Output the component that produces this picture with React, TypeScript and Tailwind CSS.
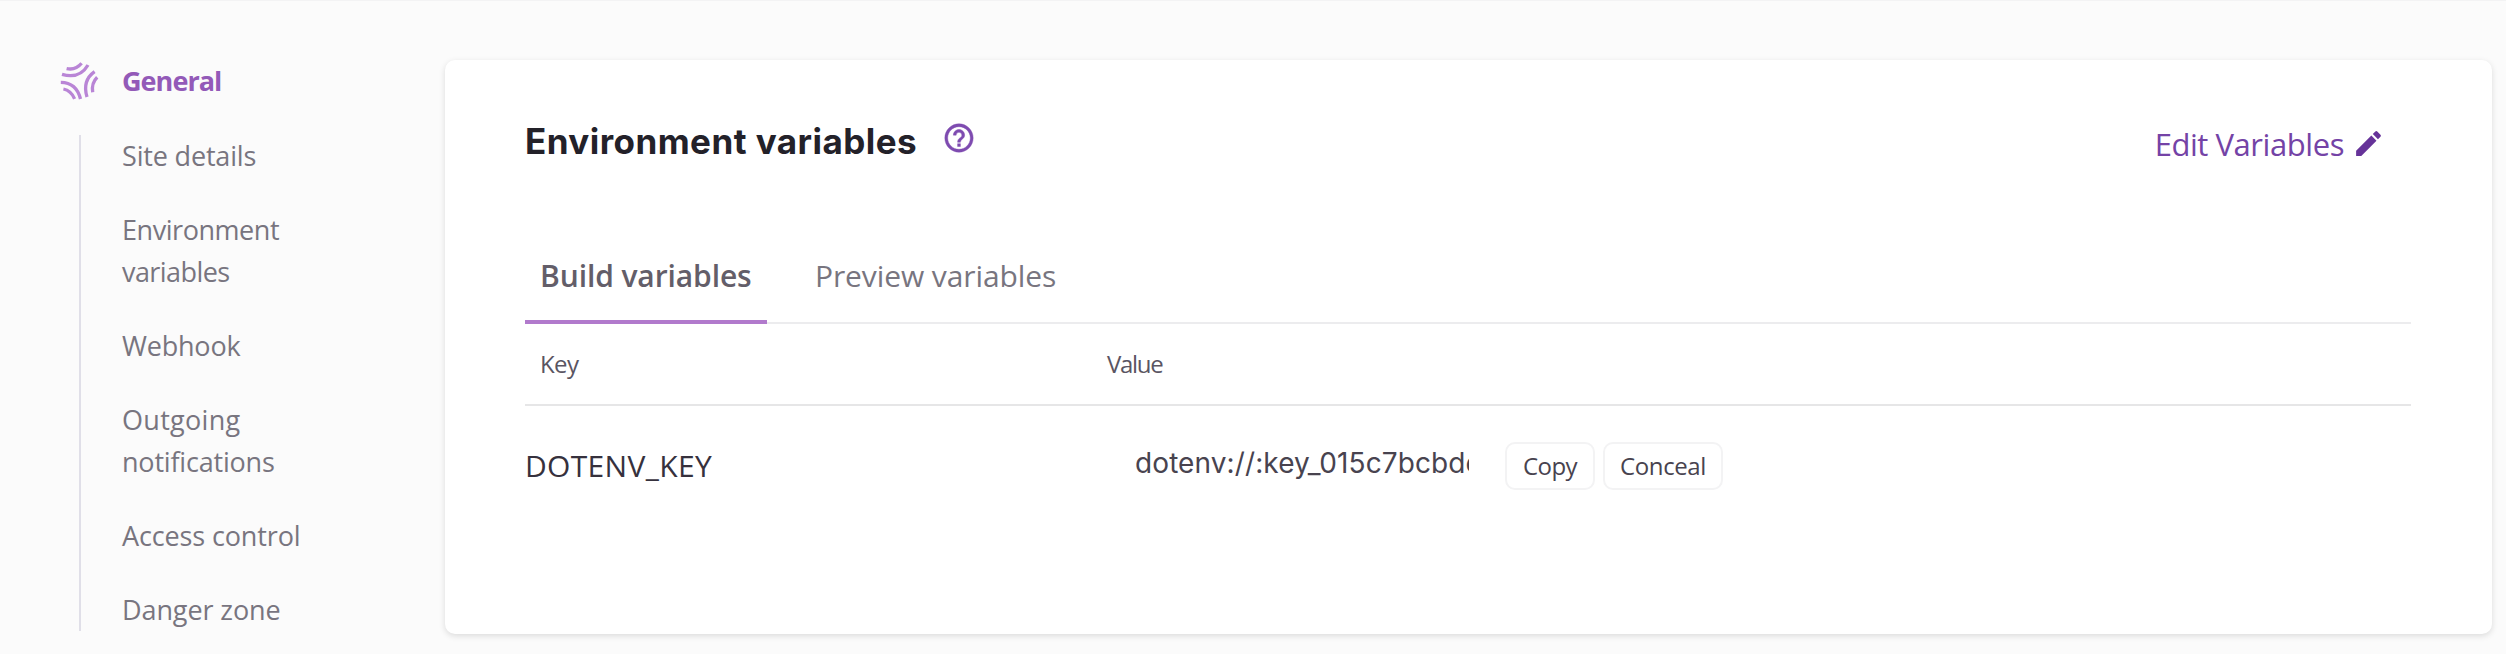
import React from 'react';

const navItems = [
  { lines: [{ text: 'Site details', tracking: 'tracking-[-0.17px]' }] },
  {
    lines: [
      { text: 'Environment', tracking: 'tracking-[-0.45px]' },
      { text: 'variables', tracking: 'tracking-[-0.56px]' },
    ],
  },
  { lines: [{ text: 'Webhook', tracking: 'tracking-[-0.2px]' }] },
  {
    lines: [
      { text: 'Outgoing', tracking: 'tracking-[0.3px]' },
      { text: 'notifications', tracking: 'tracking-[-0.2px]' },
    ],
  },
  { lines: [{ text: 'Access control', tracking: 'tracking-[-0.13px]' }] },
  { lines: [{ text: 'Danger zone', tracking: 'tracking-[-0.1px]' }] },
];

function BrandMark() {
  return (
    <svg
      className="mt-px h-[42px] w-[42px] shrink-0"
      viewBox="58 60 42 42"
      fill="none"
      stroke="#b985d6"
      strokeWidth="3.3"
      strokeLinecap="butt"
    >
      <path d="M66.6 67.6 Q75.5 69.6 81.6 62.3" />
      <path d="M62 73.3 Q79.5 78.5 88 64" />
      <path d="M60.8 81.3 Q76.5 81.5 80.5 98" />
      <path d="M63.4 88 Q71 89.5 74.6 97.8" />
      <path d="M94.6 70.6 Q82 79.5 87 96" />
      <path d="M97.2 76.2 Q91.2 82 92.7 91.3" />
    </svg>
  );
}

function HelpIcon() {
  return (
    <svg className="h-[34px] w-[34px]" viewBox="0 0 24 24" fill="#7e4bb0" stroke="#7e4bb0" strokeWidth="0.3">
      <path d="M11 18h2v-2h-2v2zm1-16C6.48 2 2 6.48 2 12s4.48 10 10 10 10-4.48 10-10S17.52 2 12 2zm0 18c-4.41 0-8-3.59-8-8s3.59-8 8-8 8 3.59 8 8-3.59 8-8 8zm0-14c-2.21 0-4 1.79-4 4h2c0-1.1.9-2 2-2s2 .9 2 2c0 2-3 1.75-3 5h2c0-2.25 3-2.5 3-5 0-2.21-1.79-4-4-4z" />
    </svg>
  );
}

function PencilIcon() {
  return (
    <svg className="h-[33px] w-[33px]" viewBox="0 0 24 24" fill="#663399">
      <path d="M3 17.25V21h3.75L17.81 9.94l-3.75-3.75L3 17.25zM20.71 7.04a.996.996 0 0 0 0-1.41l-2.34-2.34a.996.996 0 0 0-1.41 0l-1.83 1.83 3.75 3.75 1.83-1.83z" />
    </svg>
  );
}

export default function App() {
  return (
    <div className="flex h-[654px] w-[2506px] overflow-hidden border-t border-[#f3f3f4] bg-[#fbfbfb] font-['Open_Sans','Noto_Sans',sans-serif]">
      <aside className="w-[445px] shrink-0 pl-[58px] pt-[59px]">
        <div className="flex items-start">
          <BrandMark />
          <span className="ml-[22px] text-[27px] font-bold leading-[42px] tracking-[-0.95px] text-[#935ab8]">
            General
          </span>
        </div>
        <nav className="ml-[21px] mt-[32px] flex flex-col gap-8 border-l-2 border-[#e0dfe8] pl-[41px]">
          {navItems.map((item) => (
            <a key={item.lines[0].text} className="text-[27px] leading-[42px] text-[#78757f]">
              {item.lines.map((line) => (
                <span key={line.text} className={`block ${line.tracking}`}>
                  {line.text}
                </span>
              ))}
            </a>
          ))}
        </nav>
      </aside>

      <main className="mt-[59px] h-[574px] w-[2047px] rounded-[10px] bg-white pl-20 pr-[81px] shadow-[0_2px_6px_rgba(0,0,0,0.13)]">
        <header className="flex h-[195px] items-start justify-between pt-[60px]">
          <div className="flex items-start">
            <h1 className="w-[395px] whitespace-nowrap font-['Inter','Liberation_Sans',sans-serif] text-[35px] font-bold leading-[42px] tracking-[0.45px] text-[#232129] [font-optical-sizing:none]">
              Environment variables
            </h1>
            <span className="ml-[22px] mt-px">
              <HelpIcon />
            </span>
          </div>
          <a className="mr-[26px] mt-[3px] flex items-start text-[31px] leading-[42px] tracking-[-0.44px] text-[#7443a6]">
            Edit Variables
            <span className="ml-2 mt-[4px]">
              <PencilIcon />
            </span>
          </a>
        </header>

        <div className="flex h-[69px] items-stretch text-[30px] leading-[42px] tracking-[-0.1px] shadow-[inset_0_-2px_0_#ececee]">
          <div className="w-[242px] border-b-4 border-[#b17acc] pl-[15px] font-semibold text-[#635e69]">
            Build variables
          </div>
          <div className="pl-[48px] text-[#78757f]">Preview variables</div>
        </div>

        <div className="flex h-[82px] border-b-2 border-[#e6e6e7] pt-5 text-[24px] leading-[40px] text-[#5a5562]">
          <div className="w-[582px] pl-[15px] tracking-[-0.6px]">Key</div>
          <div className="tracking-[-1.3px]">Value</div>
        </div>

        <div className="flex items-start pt-9">
          <div className="mt-[3px] w-[610px] text-[30px] leading-[42px] tracking-[0.33px] text-[#36313d]">
            DOTENV_KEY
          </div>
          <div className="w-[334px] overflow-hidden whitespace-nowrap font-['Inter','Liberation_Sans',sans-serif] text-[28px] leading-[42px] tracking-[0.1px] text-[#48434f]">
            dotenv://:key_015c7bcbde
          </div>
          <div className="ml-9 flex gap-2 text-[24px] text-[#48434f]">
            <button className="h-12 w-[90px] rounded-[10px] border-2 border-[#f3f3f4] pb-px leading-[43px] tracking-[-0.6px]">
              Copy
            </button>
            <button className="h-12 w-[120px] rounded-[10px] border-2 border-[#f3f3f4] pb-px leading-[43px] tracking-[-0.4px]">
              Conceal
            </button>
          </div>
        </div>
      </main>
    </div>
  );
}
